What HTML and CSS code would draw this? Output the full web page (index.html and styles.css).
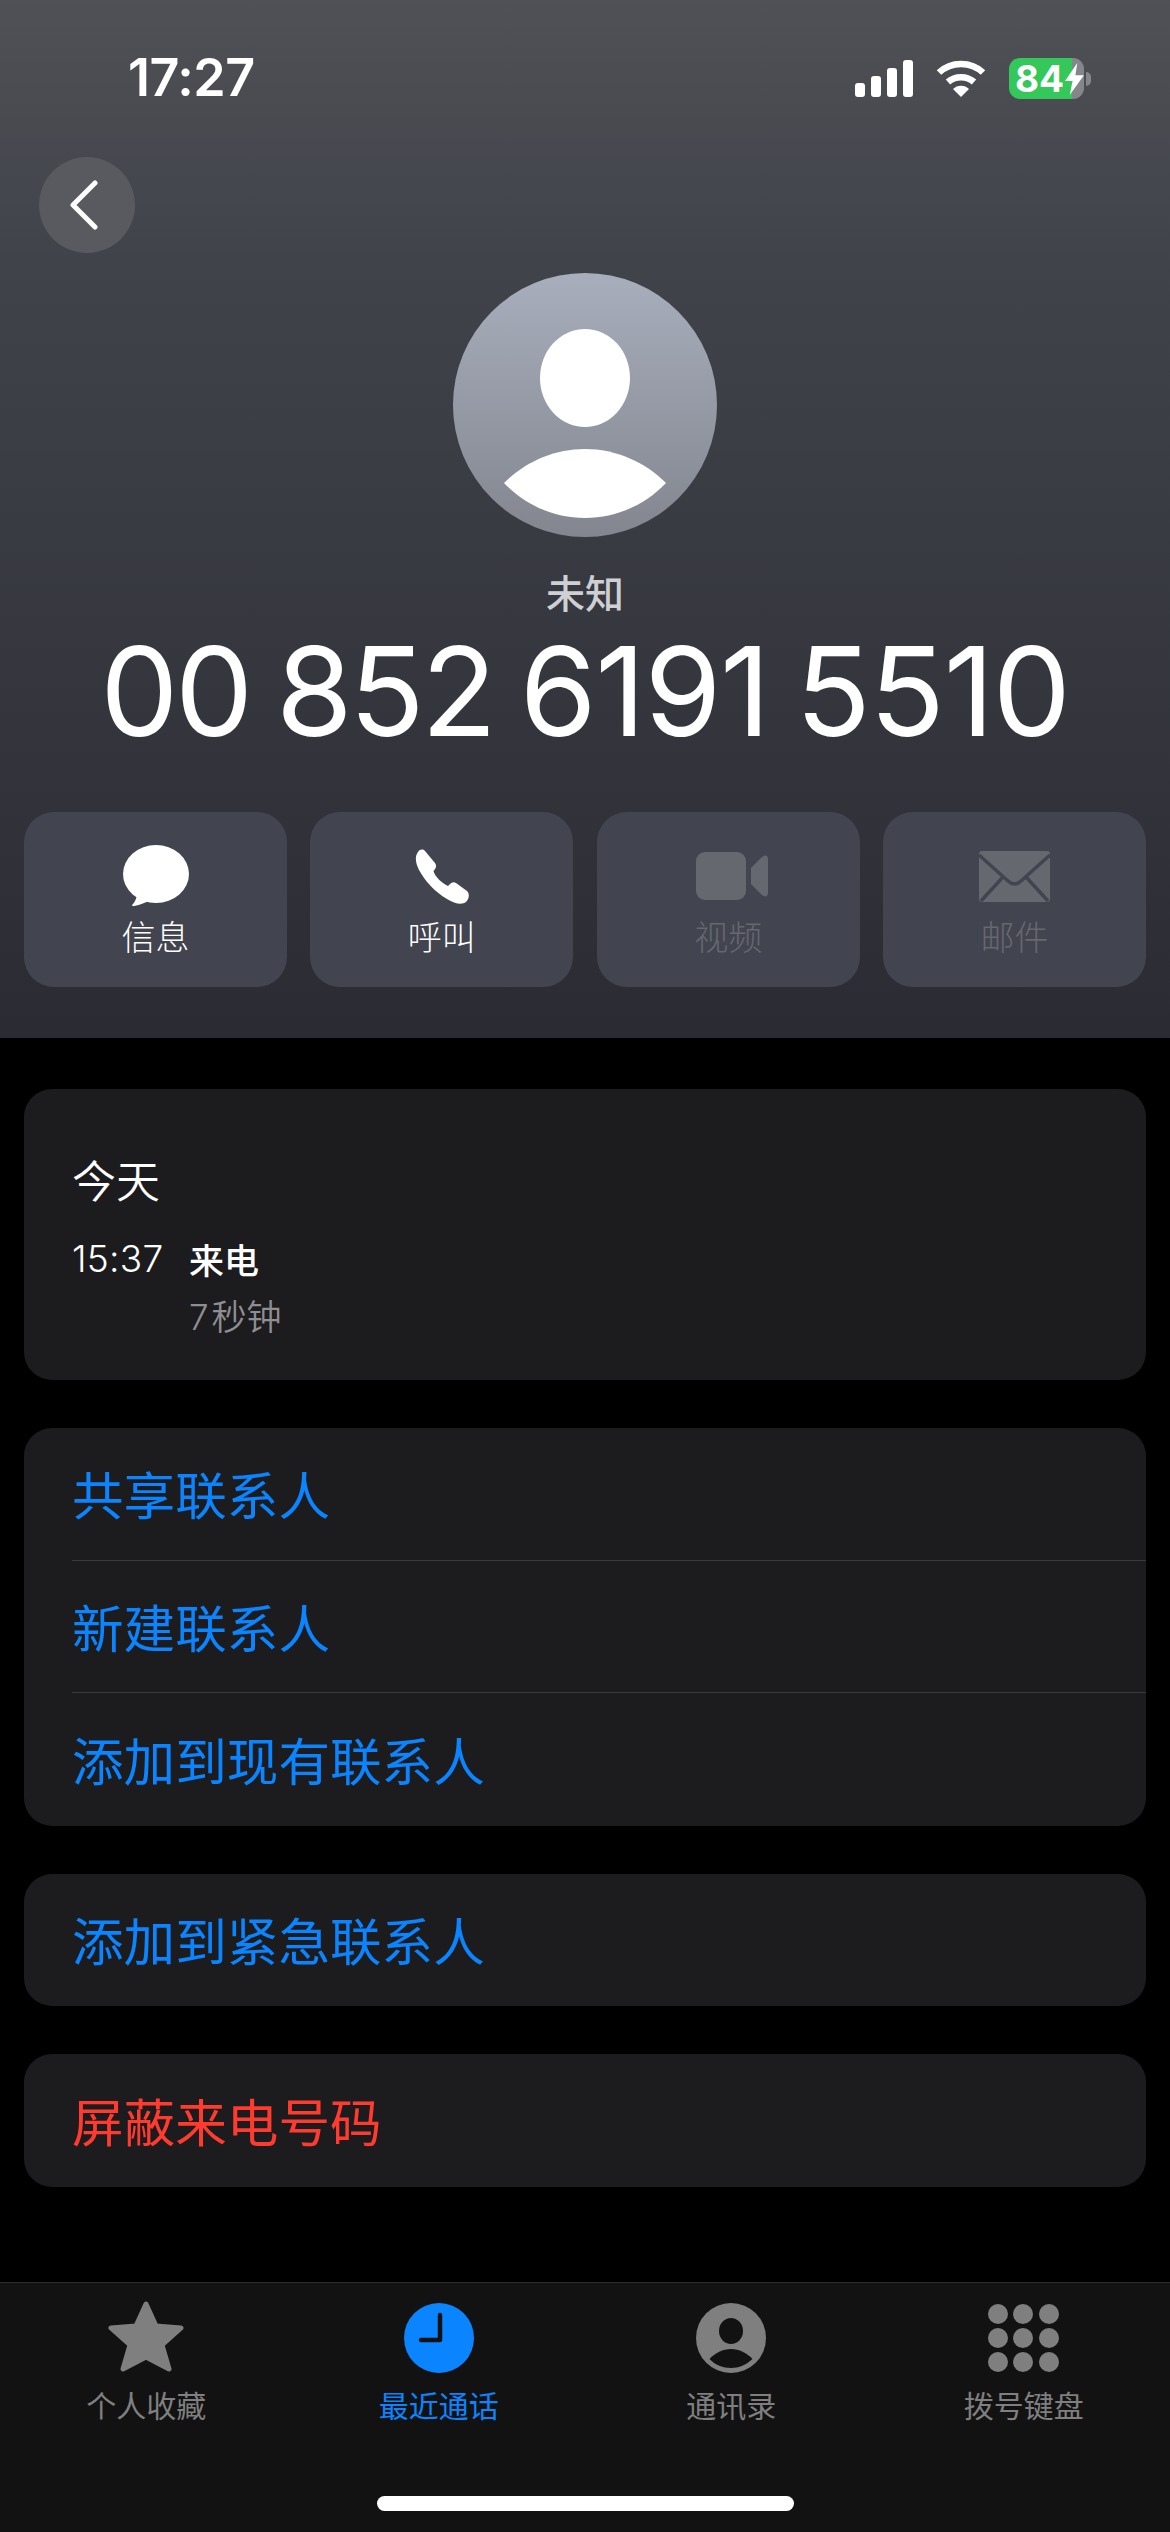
FILE: index.html
```html
<!DOCTYPE html>
<html lang="zh-CN">
  <head>
    <meta charset="UTF-8" />
    <meta name="viewport" content="width=device-width, initial-scale=1.0" />
    <title>未知 - 00 852 6191 5510</title>
    <link rel="stylesheet" href="styles.css">
  </head>
  <body>
    <header class="contact-head">
      <div class="status-bar">
        <span class="clock-text">17:27</span>
        <div class="status-icons">
          <svg class="signal" width="58" height="37" viewBox="0 0 58 37">
            <rect x="0" y="23" width="10" height="14" rx="3" />
            <rect x="16" y="16" width="10" height="21" rx="3" />
            <rect x="32" y="8" width="10" height="29" rx="3" />
            <rect x="48" y="0" width="10" height="37" rx="3" />
          </svg>
          <svg class="wifi" width="50" height="37" viewBox="0 0 50 37">
            <path class="wifi-arc" d="M3 12.5 C15 1 35 1 47 12.5" />
            <path class="wifi-arc" d="M12 22 C19 15.500 31 15.500 38 22" />
            <path d="M17 29 C21 24.500 29 24.500 33 29 L25 37 Z" />
          </svg>
          <div class="battery">
            <div class="battery-body">
              <span>84</span>
              <svg width="20" height="34" viewBox="0 0 20 34">
                <path d="M13 0 L0 19 H8 L5 34 L20 13 H11 Z" />
              </svg>
            </div>
            <div class="battery-nub"></div>
          </div>
        </div>
      </div>

      <div class="back-btn">
        <svg width="30" height="50" viewBox="0 0 30 50">
          <path d="M26 3 L4 25 L26 47" />
        </svg>
      </div>

      <div class="avatar">
        <svg width="264" height="264" viewBox="0 0 264 264">
          <ellipse cx="132" cy="105" rx="45" ry="49" />
          <path d="M51 210 C72 189 101 176 132 176 C163 176 192 189 213 210 C192 232 163 245 132 245 C101 245 72 232 51 210 Z" />
        </svg>
      </div>
      <div class="caller-label">未知</div>
      <div class="caller-number">00 852 <span class="num-wide">6191</span> <span class="num-wide">5510</span></div>

      <div class="actions">
        <div class="action">
          <svg class="msg-icon" width="66" height="62" viewBox="0 0 66 62">
            <ellipse cx="33" cy="29" rx="33" ry="29" />
            <path d="M14 48 C14 54 11 58 9 60 C9 61 10 61 11 61 C17 60 24 57 30 54 Z" />
          </svg>
          <span>信息</span>
        </div>
        <div class="action">
          <svg width="54" height="56" viewBox="0 0 54 56">
            <path d="M3 3 C5 0 8 0 10 2 L20 14 C22 17 21 19 18.500 22 C20 28 27 34 33 37 C36 34 38 32 41 34 L52 42 C55 45 54 50 51 53 C47 56 40 55 32 50 C20 43 10 32 4 21 C0 13 0 7 3 3 Z" />
          </svg>
          <span>呼叫</span>
        </div>
        <div class="action action-off">
          <svg class="video-icon" width="72" height="48" viewBox="0 0 72 48">
            <rect x="0" y="0" width="50" height="48" rx="9" />
            <path d="M55 16 L66 5 Q72 1 72 8 V40 Q72 47 66 43 L55 32 Z" />
          </svg>
          <span>视频</span>
        </div>
        <div class="action action-off">
          <svg class="mail-icon" width="71" height="51" viewBox="0 0 71 51">
            <rect x="0" y="0" width="71" height="51" rx="3" />
            <path class="mail-fold" d="M0 4 L29 30 Q35.500 36 42 30 L71 4 M24 26 L2 50 M47 26 L69 50" />
          </svg>
          <span>邮件</span>
        </div>
      </div>
    </header>

    <main class="details">
      <section class="card recent">
        <div class="recent-day">今天</div>
        <div class="recent-row">
          <span class="recent-time">15:37</span>
          <div>
            <div class="recent-kind">来电</div>
            <div class="recent-length"><span class="recent-num">7</span>秒钟</div>
          </div>
        </div>
      </section>

      <section class="card">
        <div class="row">共享联系人</div>
        <div class="row">新建联系人</div>
        <div class="row">添加到现有联系人</div>
      </section>

      <section class="card">
        <div class="row">添加到紧急联系人</div>
      </section>

      <section class="card">
        <div class="row row-danger">屏蔽来电号码</div>
      </section>
    </main>

    <nav class="tab-bar">
      <div class="tabs">
        <div class="tab">
          <svg width="76" height="73" viewBox="0 0 76 73">
            <polygon class="star" points="38,4 48,26 73,28 54,45 61,69 38,57 15,69 22,45 3,28 28,26" />
          </svg>
          <span>个人收藏</span>
        </div>
        <div class="tab tab-active">
          <svg width="70" height="73" viewBox="0 0 70 73">
            <circle cx="35" cy="38" r="35" />
            <path class="clock-hands" d="M36 15 V40 H17" />
          </svg>
          <span>最近通话</span>
        </div>
        <div class="tab">
          <svg width="70" height="73" viewBox="0 0 70 73">
            <circle cx="35" cy="38" r="35" />
            <ellipse class="cut" cx="35" cy="31" rx="12" ry="13" />
            <path class="cut" d="M13.500 59 C19 53 27 49 35 49 C43 49 51 53 56.500 59 C50 65 43 68 35 68 C27 68 19 65 13.500 59 Z" />
          </svg>
          <span>通讯录</span>
        </div>
        <div class="tab">
          <svg width="71" height="73" viewBox="0 0 71 73">
            <circle cx="10" cy="14" r="10" /><circle cx="35" cy="14" r="10" /><circle cx="61" cy="14" r="10" />
            <circle cx="10" cy="38" r="10" /><circle cx="35" cy="38" r="10" /><circle cx="61" cy="38" r="10" />
            <circle cx="10" cy="62" r="10" /><circle cx="35" cy="62" r="10" /><circle cx="61" cy="62" r="10" />
          </svg>
          <span>拨号键盘</span>
        </div>
      </div>
      <div class="home-bar"></div>
    </nav>
  </body>
</html>
```

FILE: styles.css
```css
* {
  box-sizing: border-box;
}

body {
  margin: 0;
  width: 1170px;
  height: 2532px;
  overflow: hidden;
  display: flex;
  flex-direction: column;
  background: #000;
  color: #fff;
  font-family: "Noto Sans CJK SC", "Noto Sans", sans-serif;
}

svg {
  display: block;
  fill: currentColor;
}

/* top part with the gradient */
.contact-head {
  height: 1038px;
  padding: 0 24px;
  background: linear-gradient(to bottom, #505156, #41434b 25%, #2a2b33);
}

.status-bar {
  height: 157px;
  padding: 57px 55px 0 104px;
  display: flex;
  justify-content: space-between;
  align-items: flex-start;
}

.clock-text {
  font-family: Inter, sans-serif;
  font-size: 52px;
  font-weight: 600;
  line-height: 41px;
  letter-spacing: -0.5px;
}

.status-icons {
  display: flex;
  align-items: center;
  gap: 23px;
  padding-top: 1px;
}

.wifi-arc {
  fill: none;
  stroke: #fff;
  stroke-width: 6.5px;
}

.battery {
  display: flex;
  align-items: center;
  gap: 2px;
}

.battery-body {
  width: 75px;
  height: 41px;
  padding-left: 6px;
  display: flex;
  align-items: center;
  gap: 1px;
  border-radius: 11px;
  background: linear-gradient(to right, #34c759 84%, #85868b 84%);
  font-family: Inter, sans-serif;
  font-size: 37px;
  font-weight: 700;
  line-height: 41px;
}

.battery-nub {
  width: 5px;
  height: 14px;
  border-radius: 0 5px 5px 0;
  background: #85868b;
}

.back-btn {
  width: 96px;
  height: 96px;
  margin-left: 15px;
  border-radius: 50%;
  background: #595a5f;
  display: flex;
  align-items: center;
  justify-content: center;
}

.back-btn svg {
  fill: none;
  stroke: #fff;
  stroke-width: 5px;
  stroke-linecap: round;
  stroke-linejoin: round;
  margin-right: 7px;
}

.avatar {
  width: 264px;
  height: 264px;
  margin: 20px auto 0;
  border-radius: 50%;
  background: linear-gradient(to bottom, #a8aebc, #83868f);
}

.caller-label {
  margin-top: 31px;
  text-align: center;
  font-size: 39px;
  font-weight: 500;
  line-height: 46px;
  color: #cfd0d2;
}

.caller-number {
  margin-top: 17px;
  text-align: center;
  font-family: Inter, sans-serif;
  font-size: 124px;
  font-weight: 400;
  line-height: 120px;
  letter-spacing: -3.5px;
  word-spacing: -5px;
  white-space: nowrap;
}

.num-wide {
  letter-spacing: -1.3px;
}

.actions {
  margin-top: 61px;
  display: grid;
  grid-template-columns: repeat(4, 1fr);
  gap: 23.33px;
}

.action {
  height: 175px;
  border-radius: 30px;
  background: #42444f;
  display: flex;
  flex-direction: column;
  align-items: center;
  justify-content: flex-end;
  font-size: 34px;
  line-height: 48px;
  padding-bottom: 27px;
  font-weight: 300;
}

.action svg {
  margin-bottom: 7px;
}

.action .msg-icon {
  margin-bottom: 5px;
}

.action .video-icon {
  margin-left: 7px;
  margin-bottom: 12px;
}

.action .mail-icon {
  margin-bottom: 10px;
}

.action-off {
  color: #666870;
}

.mail-fold {
  fill: none;
  stroke: #42444f;
  stroke-width: 3.5px;
}

/* cards under the header */
.details {
  flex: 1;
  padding: 51px 24px 0;
  display: flex;
  flex-direction: column;
  gap: 48px;
}

.card {
  border-radius: 28px;
  background: #1c1c1e;
}

.recent {
  height: 291px;
  padding: 59px 48px 0;
}

.recent-day {
  font-size: 44px;
  line-height: 62px;
  font-weight: 350;
}

.recent-row {
  margin-top: 24px;
  display: flex;
}

.recent-time {
  width: 117px;
  font-family: Inter, sans-serif;
  font-size: 37px;
  font-weight: 300;
  line-height: 50px;
  letter-spacing: 0.3px;
}

.recent-kind {
  font-size: 35px;
  font-weight: 500;
  line-height: 50px;
}

.recent-length {
  margin-top: 6px;
  font-size: 35px;
  font-weight: 350;
  line-height: 50px;
  color: #8e8e93;
}

.recent-num {
  font-family: Inter, sans-serif;
  margin-right: 3px;
}

.row {
  height: 132.5px;
  margin-left: 48px;
  padding-bottom: 2px;
  display: flex;
  align-items: center;
  font-size: 51.6px;
  font-weight: 400;
  color: #0a84ff;
  border-bottom: 1px solid #3a3a3c;
}

.row:last-child {
  border-bottom: none;
}

.row-danger {
  color: #ff3b30;
}

/* bottom tabs */
.tab-bar {
  height: 250px;
  background: #121212;
  border-top: 1px solid #2c2c2c;
}

.tabs {
  padding-top: 17px;
  display: grid;
  grid-template-columns: repeat(4, 1fr);
}

.tab {
  display: flex;
  flex-direction: column;
  align-items: center;
  font-size: 30px;
  line-height: 44px;
  color: #7f7f7f;
}

.tab svg {
  margin-bottom: 9px;
}

.tab-active {
  color: #0a84ff;
}

.star {
  stroke: #7f7f7f;
  stroke-width: 5px;
  stroke-linejoin: round;
}

.clock-hands {
  fill: none;
  stroke: #121212;
  stroke-width: 4.5px;
  stroke-linecap: round;
  stroke-linejoin: round;
}

.cut {
  fill: #121212;
}

.home-bar {
  width: 417px;
  height: 15px;
  margin: 70px auto 0;
  border-radius: 8px;
  background: #fff;
}
```
